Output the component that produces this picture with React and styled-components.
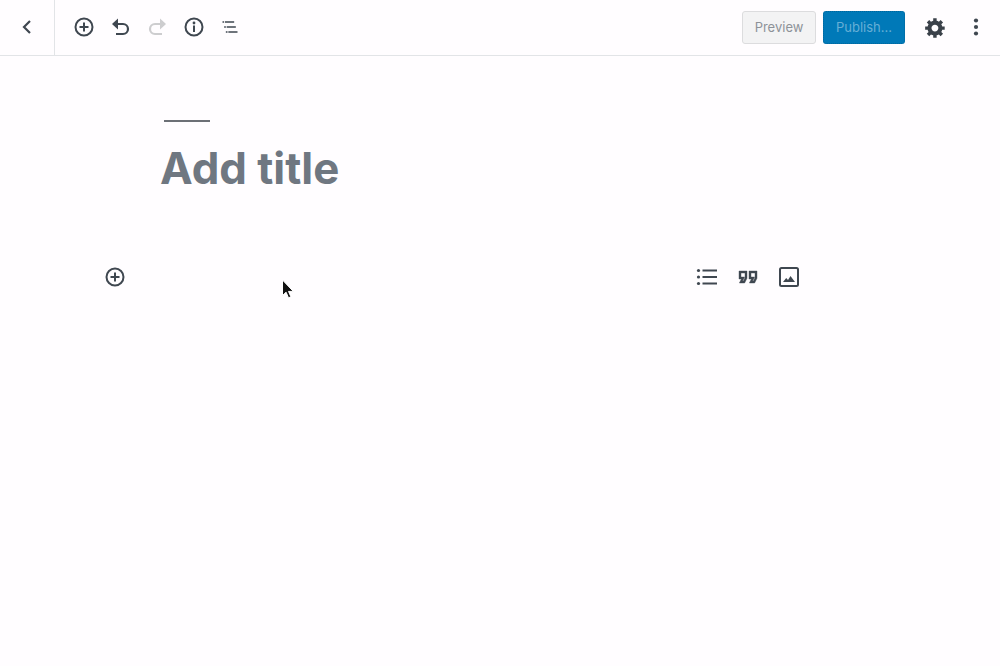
import React from "react";
import styled, { createGlobalStyle } from "styled-components";

const GlobalStyle = createGlobalStyle`
  html, body {
    margin: 0;
    padding: 0;
    background: #fffdff;
    font-family: "Inter", "Liberation Sans", sans-serif;
  }
`;

const Icon = ({ size = 24, box = 24, color = "#3f4750", children }) => (
  <svg width={size} height={size} viewBox={`0 0 ${box} ${box}`} fill={color}>
    {children}
  </svg>
);

const PlusCircle = () => (
  <Icon>
    <circle cx="12" cy="12" r="8.5" fill="none" stroke="#3f4750" strokeWidth="2" />
    <path d="M11 7.5h2V11h3.5v2H13v3.5h-2V13H7.5v-2H11z" />
  </Icon>
);

const Undo = () => (
  <Icon>
    <path d="M9 3.5v11L3 9z" />
    <path d="M6 9h8a5 5 0 0 1 0 10H7" fill="none" stroke="#3f4750" strokeWidth="2.2" />
  </Icon>
);

const Redo = () => (
  <Icon color="#cdcdcf">
    <path d="M15 3.5v11L21 9z" />
    <path d="M18 9h-8a5 5 0 0 0 0 10h7" fill="none" stroke="#cdcdcf" strokeWidth="2.2" />
  </Icon>
);

const Info = () => (
  <Icon>
    <circle cx="12" cy="12" r="8.5" fill="none" stroke="#3f4750" strokeWidth="2" />
    <circle cx="12" cy="8" r="1.4" />
    <rect x="11" y="10.5" width="2" height="6.5" />
  </Icon>
);

const Outline = () => (
  <Icon size={20}>
    <path d="M5 5H3v2h2V5zm3 8h11v-2H8v2zm9-8H6v2h11V5zM7 11H5v2h2v-2zm0 8h2v-2H7v2zm3-2v2h11v-2H10z" />
  </Icon>
);

const Gear = () => (
  <Icon size={23} box={20} color="#3a4149">
    <path d="M18 12h-2.18c-.17.7-.44 1.35-.81 1.93l1.54 1.54-2.1 2.1-1.54-1.54c-.58.36-1.23.63-1.91.79V19H8v-2.18c-.68-.16-1.33-.43-1.91-.79l-1.54 1.54-2.12-2.12 1.54-1.54c-.36-.58-.63-1.23-.79-1.91H1V9.03h2.17c.16-.7.44-1.35.8-1.94L2.43 5.55l2.1-2.1 1.54 1.54c.58-.37 1.24-.64 1.93-.81V2h3v2.18c.68.16 1.33.43 1.91.79l1.54-1.54 2.12 2.12-1.54 1.54c.36.59.64 1.24.8 1.94H18V12zm-8.5 1.5c1.66 0 3-1.34 3-3s-1.34-3-3-3-3 1.34-3 3 1.34 3 3 3z" />
  </Icon>
);

const Dots = () => (
  <Icon>
    <circle cx="12" cy="5.5" r="2.1" />
    <circle cx="12" cy="12" r="2.1" />
    <circle cx="12" cy="18.5" r="2.1" />
  </Icon>
);

const List = () => (
  <Icon>
    <circle cx="3.5" cy="5.5" r="1.6" />
    <circle cx="3.5" cy="12" r="1.6" />
    <circle cx="3.5" cy="18.5" r="1.6" />
    <path d="M7.5 4.5h14.5v2H7.5zM7.5 11h14.5v2H7.5zM7.5 17.5h14.5v2H7.5z" />
  </Icon>
);

const Quote = () => (
  <Icon>
    <path
      d="M18.62 18h-5.24l2-4H13V6h8v7.24L18.62 18zm-2-2h.76L19 12.76V8h-4v4h3.62l-2 4zm-8 2H3.38l2-4H3V6h8v7.24L8.62 18zm-2-2h.76L9 12.76V8H5v4h3.62l-2 4z"
      stroke="#3f4750"
      strokeWidth="0.4"
    />
  </Icon>
);

const Picture = () => (
  <Icon>
    <rect x="3" y="3" width="18" height="18" rx="1.5" fill="none" stroke="#3f4750" strokeWidth="2" />
    <path d="M6 17l3.2-4 1.8 2 2.5-4 4.5 6z" />
  </Icon>
);

const App = () => (
  <Page>
    <GlobalStyle />
    <Toolbar>
      <BackCell>
        <svg width="24" height="24" viewBox="0 0 24 24" fill="none" stroke="#3f4750" strokeWidth="2.2">
          <path d="M16 6l-6 6 6 6" />
        </svg>
      </BackCell>
      <ToolGroup>
        <ToolButton><PlusCircle /></ToolButton>
        <ToolButton><Undo /></ToolButton>
        <ToolButton><Redo /></ToolButton>
        <ToolButton><Info /></ToolButton>
        <ToolButton><Outline /></ToolButton>
      </ToolGroup>
      <Actions>
        <PreviewButton>Preview</PreviewButton>
        <PublishButton>Publish...</PublishButton>
        <GearSlot><Gear /></GearSlot>
        <DotsSlot><Dots /></DotsSlot>
      </Actions>
    </Toolbar>
    <Editor>
      <TitleRule />
      <Title>Add title</Title>
      <InserterRow>
        <Inserter><PlusCircle /></Inserter>
        <BlockShortcuts>
          <Shortcut><List /></Shortcut>
          <Shortcut><Quote /></Shortcut>
          <Shortcut><Picture /></Shortcut>
        </BlockShortcuts>
        <Cursor width="14" height="22" viewBox="0 0 14 22">
          <path d="M1.5 1v15.5l3.6-3.3 2.4 5.6 2.4-1-2.4-5.4h4.8z" fill="#111" stroke="#fff" strokeWidth="1" />
        </Cursor>
      </InserterRow>
    </Editor>
  </Page>
);

export default App;

const Page = styled.div`
  width: 1000px;
  height: 666px;
  overflow: hidden;
  background: #fffdff;
`;

const Toolbar = styled.header`
  display: flex;
  align-items: stretch;
  height: 55px;
  border-bottom: 1px solid #e2e4e7;
`;

const BackCell = styled.div`
  display: flex;
  align-items: center;
  justify-content: center;
  width: 55px;
  padding: 0 3px 1px 0;
  box-sizing: border-box;
  border-right: 1px solid #e2e4e7;
`;

const ToolGroup = styled.div`
  display: flex;
  align-items: center;
  margin-left: 10.7px;
  padding-bottom: 1px;
`;

const ToolButton = styled.div`
  display: flex;
  align-items: center;
  justify-content: center;
  width: 36.6px;
  height: 36px;
`;

const Actions = styled.div`
  display: flex;
  align-items: center;
  margin-left: auto;
  padding-bottom: 1px;
`;

const BaseButton = styled.div`
  display: flex;
  align-items: center;
  justify-content: center;
  height: 33px;
  box-sizing: border-box;
  border-radius: 3px;
  font-size: 13px;
`;

const PreviewButton = styled(BaseButton)`
  width: 74px;
  background: #f3f3f4;
  border: 1px solid #dcdcde;
  color: #8d9298;
`;

const PublishButton = styled(BaseButton)`
  width: 82px;
  margin-left: 7px;
  background: #0079b8;
  border: 1px dotted #00669b;
  color: #66afd6;
`;

const GearSlot = styled.div`
  display: flex;
  justify-content: center;
  width: 24px;
  margin-left: 18px;
`;

const DotsSlot = styled.div`
  display: flex;
  justify-content: center;
  width: 24px;
  margin-left: 17px;
  margin-right: 12px;
`;

const Editor = styled.main`
  display: flex;
  flex-direction: column;
`;

const TitleRule = styled.div`
  width: 46px;
  height: 2px;
  margin: 64px 0 0 164px;
  background: #6c7076;
`;

const Title = styled.h1`
  margin: 20px 0 0 160px;
  font-size: 43.8px;
  line-height: 54px;
  font-weight: 700;
  color: #6f7781;
`;

const InserterRow = styled.div`
  position: relative;
  display: flex;
  align-items: center;
  height: 36px;
  margin-top: 63px;
  padding-left: 103px;
`;

const Inserter = styled.div`
  display: flex;
`;

const BlockShortcuts = styled.div`
  display: flex;
  gap: 17px;
  margin-left: 567.5px;
`;

const Shortcut = styled.div`
  display: flex;
`;

const Cursor = styled.svg`
  position: absolute;
  left: 281px;
  top: 20px;
`;
